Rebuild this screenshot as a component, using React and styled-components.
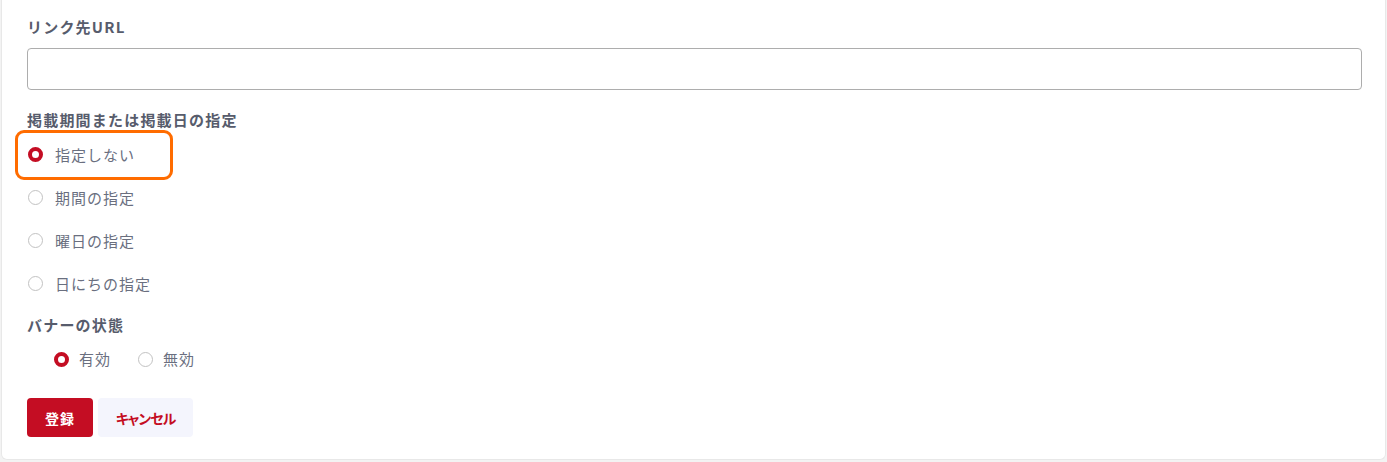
import React from 'react'
import styled, { createGlobalStyle } from 'styled-components'

const red = '#c40d23'
const labelGrey = '#575c6c'
const textGrey = '#6a6f7f'

const Global = createGlobalStyle`
    body {
        margin: 0;
        background: #f3f3f3;
        font-family: "Noto Sans CJK JP", "Noto Sans", sans-serif;
    }
`

const Card = styled.div`
    margin-left: 1px;
    margin-right: 1px;
    height: 460px;
    box-sizing: border-box;
    background: #fff;
    border: 1px solid #e8e8e8;
    border-top: none;
    border-radius: 0 0 6px 6px;
    padding: 16px 23px 0 25px;
`

const Field = styled.div`
    display: flex;
    flex-direction: column;
    margin-top: ${p => p.$top || 0}px;
`

const Label = styled.div`
    font-size: 15px;
    font-weight: bold;
    line-height: 22px;
    letter-spacing: 1.2px;
    color: ${labelGrey};
`

const TextInput = styled.input`
    margin-top: 10px;
    height: 42px;
    box-sizing: border-box;
    border: 1px solid #adadad;
    border-radius: 4px;
    font-size: 15px;
    padding: 0 12px;
    outline: none;
`

const RadioList = styled.div`
    display: flex;
    flex-direction: ${p => (p.$inline ? 'row' : 'column')};
    gap: ${p => (p.$inline ? '27px' : '0')};
    padding-left: ${p => (p.$inline ? '27px' : '1px')};
    margin-top: ${p => (p.$inline ? '0' : '2px')};
`

const RadioRow = styled.label`
    position: relative;
    display: flex;
    align-items: center;
    gap: ${p => (p.$inline ? '10px' : '12px')};
    height: ${p => (p.$inline ? '46px' : '43px')};
    font-size: 15px;
    line-height: 20px;
    letter-spacing: 1px;
    color: ${textGrey};
    cursor: pointer;
`

const Dot = styled.span`
    flex-shrink: 0;
    width: 15px;
    height: 15px;
    box-sizing: border-box;
    border-radius: 50%;
    background: #fff;
    border: ${p => (p.$on ? `4px solid ${red}` : '1.5px solid #c2c2c2')};
`

const Highlight = styled.span`
    position: absolute;
    left: -13px;
    top: -3px;
    width: 158px;
    height: 50px;
    box-sizing: border-box;
    border: 3px solid #ff6c00;
    border-radius: 9px;
    pointer-events: none;
`

const Actions = styled.div`
    display: flex;
    gap: 5px;
    margin-top: 16px;
`

const Button = styled.button`
    height: 39px;
    width: ${p => p.$w}px;
    padding: 0;
    border: none;
    border-radius: 4px;
    font-family: inherit;
    font-size: 14px;
    font-weight: bold;
    letter-spacing: ${p => (p.$primary ? '1px' : '-1px')};
    font-feature-settings: "palt";
    background: ${p => (p.$primary ? red : '#f4f5fd')};
    color: ${p => (p.$primary ? '#fff' : red)};
    cursor: pointer;
`

function Radio({ on, label, inline, children }) {
    return (
        <RadioRow $inline={inline}>
            <Dot $on={on} />
            {label}
            {children}
        </RadioRow>
    )
}

export default function App() {
    return (
        <>
            <Global />
            <Card>
                <Field>
                    <Label>リンク先URL</Label>
                    <TextInput type="text" />
                </Field>

                <Field $top={19}>
                    <Label>掲載期間または掲載日の指定</Label>
                    <RadioList>
                        <Radio on label="指定しない">
                            <Highlight />
                        </Radio>
                        <Radio label="期間の指定" />
                        <Radio label="曜日の指定" />
                        <Radio label="日にちの指定" />
                    </RadioList>
                </Field>

                <Field $top={9}>
                    <Label>バナーの状態</Label>
                    <RadioList $inline>
                        <Radio inline on label="有効" />
                        <Radio inline label="無効" />
                    </RadioList>
                </Field>

                <Actions>
                    <Button $primary $w={66}>登録</Button>
                    <Button $w={95}>キャンセル</Button>
                </Actions>
            </Card>
        </>
    )
}
